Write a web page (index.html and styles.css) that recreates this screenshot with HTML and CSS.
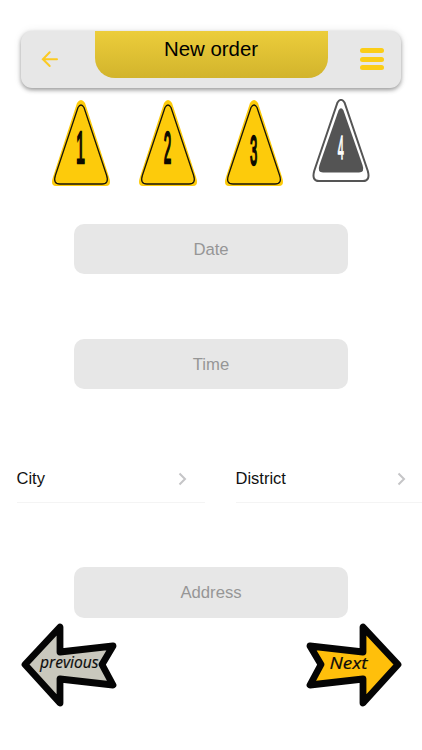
FILE: index.html
```html
<!DOCTYPE html>
<html lang="en">
<head>
<meta charset="utf-8">
<title>New order</title>
<link rel="stylesheet" href="styles.css">
</head>
<body>
<header class="bar">
  <svg class="back" viewBox="0 0 18 18"><path d="M16 9.2H2.2M8.7 2.3 1.9 9.2l6.8 6.8"/></svg>
  <h1 class="title">New order</h1>
  <div class="menu"><i></i><i></i><i></i></div>
</header>
<nav class="steps">
  <svg class="step" viewBox="0 0 58 88"><path class="cone" d="M25 4Q29-2 33 4L57 78Q60 87 54 87H4Q-2 87 1 78Z"/><path class="line" d="M26 8.500Q29 3.500 32 8.500L54.500 76Q57.500 85 50 85H8Q.5 85 3.500 76Z"/><text class="num" transform="translate(28.6 64) scale(.36 1)">1</text></svg>
  <svg class="step" viewBox="0 0 58 88"><path class="cone" d="M25 4Q29-2 33 4L57 78Q60 87 54 87H4Q-2 87 1 78Z"/><path class="line" d="M26 8.500Q29 3.500 32 8.500L54.500 76Q57.500 85 50 85H8Q.5 85 3.500 76Z"/><text class="num" transform="translate(28.6 64) scale(.3 1)">2</text></svg>
  <svg class="step" viewBox="0 0 58 88"><path class="cone" d="M25 4Q29-2 33 4L57 78Q60 87 54 87H4Q-2 87 1 78Z"/><path class="line" d="M26 8.500Q29 3.500 32 8.500L54.500 76Q57.500 85 50 85H8Q.5 85 3.500 76Z"/><text class="num three" transform="translate(28.6 65.500) scale(.31 1)">3</text></svg>
  <svg class="step" viewBox="0 0 58 88"><path class="rim" d="M25.5 3.5Q29-1.8 32.5 3.5L55.8 72Q58.5 82 51 82H7Q-.5 82 2.2 72Z"/><path class="core" d="M26.500 11.5Q29 7 31.500 11.5L50.500 66Q53 73.500 47 73.500H11Q5 73.500 7.500 66Z"/><text class="num four" transform="translate(28.7 60.300) scale(.32 1)">4</text></svg>
</nav>
<main class="form">
  <div class="field">Date</div>
  <div class="field">Time</div>
  <div class="selects">
    <div class="select"><span>City</span><svg viewBox="0 0 9 14"><path d="m1.500 1.500 5.500 5.500-5.500 5.500"/></svg></div>
    <div class="select"><span>District</span><svg viewBox="0 0 9 14"><path d="m1.500 1.500 5.500 5.500-5.500 5.500"/></svg></div>
  </div>
  <div class="field">Address</div>
</main>
<footer class="pager">
  <svg class="arrow" viewBox="0 0 96 86"><path class="prev" d="M4 42.500 39 5V30L92 24 81 42.500 92 63 39 57V81Z"/><text x="19" y="46" textLength="58.500" lengthAdjust="spacingAndGlyphs">previous</text></svg>
  <svg class="arrow" viewBox="0 0 96 86"><path class="next" d="M92 42.500 57 5V30L4 24 15 42.500 4 63 57 57V81Z"/><text x="23.500" y="46.500" textLength="38" lengthAdjust="spacingAndGlyphs">Next</text></svg>
</footer>
</body>
</html>
```
FILE: styles.css
```css
* { box-sizing: border-box; }
body {
  margin: 0;
  height: 750px;
  padding-top: 30.5px;
  overflow: hidden;
  background: #fff;
  color: #111;
  font-family: "Liberation Sans", Arial, sans-serif;
}
svg { display: block; flex: none; }
.bar {
  display: flex;
  justify-content: space-between;
  width: 380px;
  height: 57.5px;
  margin: 0 auto;
  padding: 0 17px 0 20px;
  border-radius: 11px;
  background: #e7e7e7;
  box-shadow: 0 2px 4px rgba(0, 0, 0, .38), 0 0 10px rgba(0, 0, 0, .07);
}
.back {
  width: 18px;
  height: 18px;
  margin-top: 19.500px;
  fill: none;
  stroke: #fbca23;
  stroke-width: 2;
  stroke-linecap: round;
}
.title {
  width: 233px;
  height: 47px;
  margin: 0 -3.500px 0 0;
  border-radius: 0 0 20px 20px;
  background: linear-gradient(#eccd3b, #d2b42c);
  color: #000;
  font-size: 20.400px;
  font-weight: 400;
  line-height: 37px;
  text-align: center;
}
.menu {
  display: flex;
  flex-direction: column;
  gap: 3.700px;
  width: 24.500px;
  margin-top: 17.500px;
}
.menu i { height: 5px; border-radius: 3px; background: #fbcd17; }
.steps {
  display: flex;
  gap: 28.500px;
  margin: 11px 0 0 52px;
}
.step { width: 58px; height: 88px; }
.cone { fill: #fdcb0b; }
.line { fill: none; stroke: #17140a; stroke-width: 1.300; }
.rim { fill: #fff; stroke: #555; stroke-width: 2; }
.core { fill: #545454; }
.num {
  fill: #0c0a00;
  stroke: #0c0a00;
  stroke-width: 1.700;
  vector-effect: non-scaling-stroke;
  font-size: 45px;
  text-anchor: middle;
}
.three { font-size: 42px; }
.four { font-size: 34px; fill: #fff; stroke: #fff; stroke-width: 1; }
.form {
  display: flex;
  flex-direction: column;
  align-items: center;
  margin-top: 36.500px;
}
.field {
  width: 274px;
  height: 50.500px;
  margin-bottom: 64.500px;
  border-radius: 10px;
  background: #e7e7e7;
  color: #969696;
  font-size: 16.700px;
  line-height: 52px;
  text-align: center;
}
.selects {
  display: grid;
  grid-template-columns: 188px 188px;
  gap: 31px;
  align-self: flex-start;
  margin: 0 0 64.500px 16.500px;
}
.select {
  display: flex;
  align-items: center;
  justify-content: space-between;
  height: 49px;
  padding: 2px 18px 0 0;
  border-bottom: 1px solid #f4f4f4;
  font-size: 16.500px;
}
.select svg {
  width: 9px;
  height: 14px;
  fill: none;
  stroke: #c5c5c7;
  stroke-width: 2;
}
.pager {
  display: flex;
  justify-content: space-between;
  margin: -60.500px 20.500px 0 20.500px;
}
.arrow { width: 96px; height: 86px; }
.arrow path {
  stroke: #050505;
  stroke-width: 6.800;
  stroke-linejoin: round;
}
.prev { fill: #c9c8bd; }
.next { fill: #ffbf0b; }
.arrow text {
  font: italic 16px "Open Sans", sans-serif;
  fill: #0b0b0b;
  stroke: #0b0b0b;
  stroke-width: .2;
}
```
